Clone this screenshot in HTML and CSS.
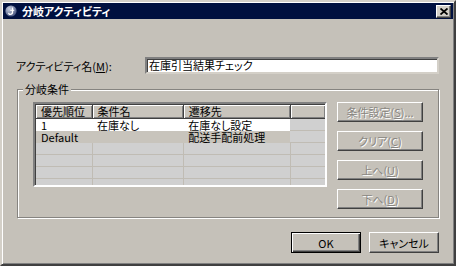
FILE: index.html
```html
<!DOCTYPE html>
<html lang="ja">
<head>
    <meta charset="UTF-8">
    <title>分岐アクティビティ</title>
    <link rel="stylesheet" href="styles.css">
</head>
<body>
    <div class="window">
        <div class="titlebar">
            <svg class="app-icon" width="12" height="12" viewBox="0 0 12 12">
                <defs>
                    <radialGradient id="g" cx="0.35" cy="0.3" r="0.8">
                        <stop offset="0" stop-color="#c8cfe0"/>
                        <stop offset="1" stop-color="#3c4a78"/>
                    </radialGradient>
                </defs>
                <circle cx="6" cy="6" r="5.6" fill="url(#g)"/>
                <path d="M7.5 2.5 L7.5 7.2 Q7.5 9.3 5.3 9.3 Q3.6 9.3 3.8 7.8" fill="none" stroke="#fff" stroke-width="1.3"/>
                <path d="M5.2 5.3 L9.2 5.3" stroke="#fff" stroke-width="1.1"/>
            </svg>
            <span class="title">分岐アクティビティ</span>
            <button class="close-btn">
                <svg width="8" height="7" viewBox="0 0 8 7">
                    <path d="M0.5 0.5 L7.5 6.5 M7.5 0.5 L0.5 6.5" stroke="#000" stroke-width="1.8"/>
                </svg>
            </button>
        </div>

        <div class="content">
            <div class="name-row">
                <label class="name-label">アクティビティ名(<u>M</u>):</label>
                <div class="textbox">在庫引当結果チェック</div>
            </div>

            <div class="group">
                <span class="group-title">分岐条件</span>
                <div class="grid">
                    <table>
                        <tr class="head">
                            <th class="c1">優先順位</th>
                            <th class="c2">条件名</th>
                            <th class="c3">遷移先</th>
                            <th class="c4"></th>
                        </tr>
                        <tr class="sel">
                            <td>1</td>
                            <td>在庫なし</td>
                            <td>在庫なし設定</td>
                            <td class="blank"></td>
                        </tr>
                        <tr class="def">
                            <td>Default</td>
                            <td></td>
                            <td>配送手配前処理</td>
                            <td class="blank"></td>
                        </tr>
                        <tr class="empty"><td></td><td></td><td></td><td></td></tr>
                        <tr class="empty"><td></td><td></td><td></td><td></td></tr>
                        <tr class="empty"><td></td><td></td><td></td><td></td></tr>
                        <tr class="empty"><td></td><td></td><td></td><td></td></tr>
                    </table>
                </div>
                <div class="side-buttons">
                    <button class="btn disabled">条件設定(<u>S</u>)...</button>
                    <button class="btn disabled">クリア(<u>C</u>)</button>
                    <button class="btn disabled">上へ(<u>U</u>)</button>
                    <button class="btn disabled">下へ(<u>D</u>)</button>
                </div>
            </div>

            <div class="footer">
                <button class="btn default">OK</button>
                <button class="btn">キャンセル</button>
            </div>
        </div>
    </div>
</body>
</html>
```

FILE: styles.css
```css
body {
    margin: 0;
    padding: 0;
    background-color: #c5c1b9;
    font-family: "Noto Sans CJK JP", "Liberation Sans", sans-serif;
    font-size: 11px;
    font-feature-settings: "palt";
    color: #000;
}

.window {
    width: 456px;
    height: 266px;
    box-sizing: border-box;
    padding: 1px;
    border: 2px solid;
    border-color: #d4d0c8 #404040 #404040 #d4d0c8;
    box-shadow: inset 1px 1px 0 #fff, inset -1px -1px 0 #808080;
    background-color: #c5c1b9;
    overflow: hidden;
}

.titlebar {
    height: 16px;
    display: flex;
    align-items: center;
    padding: 0 2px 0 2px;
    background-color: #00103f;
    color: #fff;
}

.app-icon {
    margin-right: 5px;
}

.title {
    flex: 1;
    font-weight: bold;
    font-size: 11px;
    line-height: 14px;
}

.close-btn {
    width: 15px;
    height: 13px;
    padding: 0;
    display: flex;
    align-items: center;
    justify-content: center;
    background-color: #d4d0c8;
    border: 1px solid;
    border-color: #fff #404040 #404040 #fff;
    box-shadow: inset -1px -1px 0 #808080;
}

.content {
    padding: 38px 14px 0 13px;
}

.name-row {
    display: flex;
    align-items: center;
    height: 17px;
}

.name-label {
    width: 129px;
    line-height: 14px;
}

.textbox {
    flex: 1;
    height: 17px;
    box-sizing: border-box;
    padding: 0 2px;
    line-height: 13px;
    background-color: #fff;
    border: 2px solid;
    border-color: #808080 #d4d0c8 #d4d0c8 #808080;
    box-shadow: inset 1px 1px 0 #404040;
    white-space: nowrap;
}

.group {
    position: relative;
    display: flex;
    align-items: flex-start;
    margin: 15px 0 0 1px;
    padding: 12px 0 8px 15px;
    border: 1px solid #868480;
    box-shadow: 1px 1px 0 #fff, inset 1px 1px 0 #fff;
}

.group-title {
    position: absolute;
    top: -8px;
    left: 5px;
    padding: 0 2px;
    line-height: 14px;
    background-color: #c5c1b9;
}

.grid {
    width: 294px;
    height: 85px;
    box-sizing: border-box;
    overflow: hidden;
    border: 2px solid;
    border-color: #808080 #fff #fff #808080;
    box-shadow: inset 1px 1px 0 #404040;
    background-color: #d0d0d0;
}

.grid table {
    border-collapse: collapse;
    table-layout: fixed;
    width: 290px;
    margin: 1px 0 0 1px;
}

.grid th,
.grid td {
    padding: 0 0 0 5px;
    height: 12px;
    line-height: 12px;
    font-weight: normal;
    text-align: left;
    white-space: nowrap;
    box-sizing: border-box;
}

.grid th {
    height: 13px;
    background-color: #c8c4bc;
    border-right: 1px solid #404040;
    border-bottom: 1px solid #404040;
    box-shadow: inset 1px 1px 0 #fff, inset -1px -1px 0 #808080;
}

.grid .c1 { width: 56px; }
.grid .c2 { width: 91px; }
.grid .c3 { width: 107px; }
.grid .c4 { width: 35px; }

.sel td {
    background-color: #fff;
}

.def td {
    background-color: #c8c4bc;
}

.grid td.blank {
    background-color: #d0d0d0;
    border-right: 1px solid #c0bcb4;
    border-bottom: 1px solid #c0bcb4;
}

.empty td {
    border-right: 1px solid #c0bcb4;
    border-bottom: 1px solid #c0bcb4;
}

.side-buttons {
    display: flex;
    flex-direction: column;
    gap: 9px;
    margin-left: 10px;
}

.btn {
    height: 20px;
    width: 86px;
    padding: 0;
    font-family: "Noto Sans CJK JP", "Liberation Sans", sans-serif;
    font-size: 11px;
    font-feature-settings: "palt";
    line-height: 14px;
    color: #000;
    background-color: #c5c1b9;
    border: 1px solid;
    border-color: #fff #404040 #404040 #fff;
    box-shadow: inset -1px -1px 0 #808080;
}

.btn.disabled {
    color: #8a8782;
    text-shadow: 1px 1px 0 #fff;
}

.footer {
    display: flex;
    justify-content: flex-end;
    gap: 8px;
    margin-top: 14px;
}

.footer .btn {
    width: 70px;
    height: 21px;
}

.btn.default {
    border: 1px solid #000;
    box-shadow: inset 1px 1px 0 #fff, inset -1px -1px 0 #404040, inset -2px -2px 0 #808080;
}
```
